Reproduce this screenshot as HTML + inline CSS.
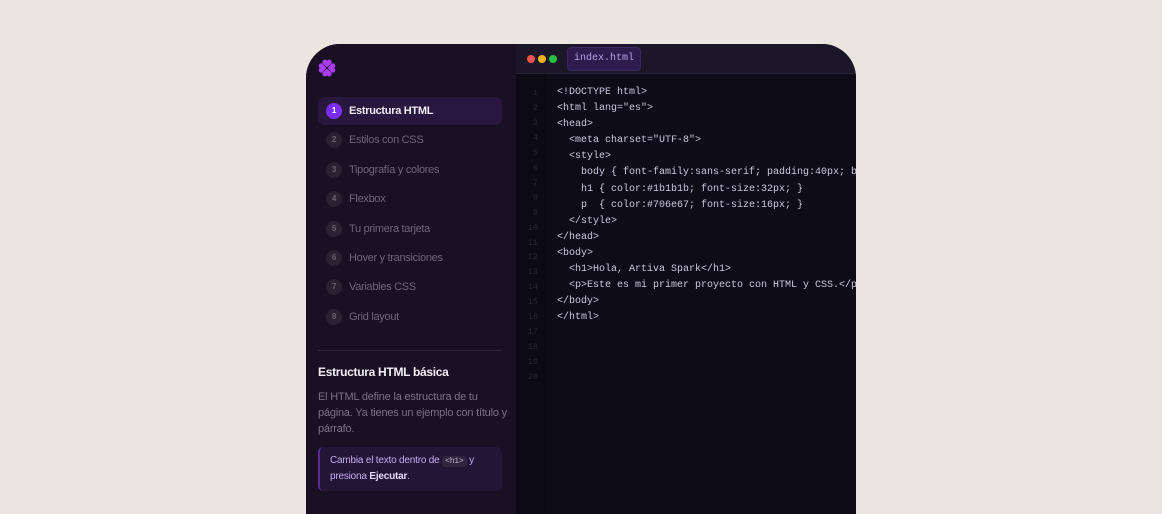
<!DOCTYPE html>
<html><head><style>
*{margin:0;padding:0;box-sizing:border-box}
body{width:1162px;height:501px;background:#ebe7e0;position:relative;overflow:hidden;font-family:"Liberation Sans",sans-serif}
.panel{position:absolute;left:306px;top:44px;width:550px;height:470px;border-radius:34px 34px 0 0;overflow:hidden;background:#1a1024}
.side{position:absolute;left:0;top:0;width:210px;height:100%;background:#1a1024}
.item{position:absolute;left:12px;width:184px;height:28px;border-radius:7px;font-size:11px;color:#6e6479;letter-spacing:-0.3px}
.item .n{position:absolute;left:8px;top:6px;width:16px;height:16px;border-radius:50%;background:#2a2133;color:#6a6074;font-size:8px;text-align:center;line-height:16px;font-weight:bold}
.item .t{position:absolute;left:31px;top:0;line-height:28px}
.item.a{background:#2a1740;color:#f1ecf6;font-weight:bold}
.item.a .n{background:#7c2ef0;color:#fff}
.ed{position:absolute;left:210px;top:0;right:0;height:100%;background:#0f0c1a}
.hdr{position:absolute;left:0;top:0;right:0;height:30px;background:#1b1628;border-bottom:1px solid #2a2436}
.dot{position:absolute;top:11px;width:8px;height:8px;border-radius:50%}
.tab{position:absolute;left:51px;top:3px;width:74px;height:24px;background:#2d1b4d;border:1px solid #3c2766;border-radius:4px;color:#b9a3e6;font:10px "Liberation Mono",monospace;text-align:center;line-height:22px}
.gut{position:absolute;left:0;top:30px;width:30px;bottom:0;background:#0c0a15;color:#2c2838;font:8.5px "Liberation Mono",monospace;text-align:right;padding-right:8px;padding-top:12px;line-height:14.95px}
pre{position:absolute;left:41px;top:41px;font:10px "Liberation Mono",monospace;color:#cbc8dc;line-height:16.1px;white-space:pre}
</style></head><body>
<div class="panel">
<div class="side">
<svg style="position:absolute;left:11px;top:14px" width="20" height="20" viewBox="0 0 18 18">
<g fill="#a93cf2">
<path id="h" d="M9 8.4 L5.2 5.1 A2.3 2.3 0 1 1 9 2.5 A2.3 2.3 0 1 1 12.8 5.1 Z"/>
<path d="M9 8.4 L5.2 5.1 A2.3 2.3 0 1 1 9 2.5 A2.3 2.3 0 1 1 12.8 5.1 Z" transform="rotate(90 9 9)"/>
<path d="M9 8.4 L5.2 5.1 A2.3 2.3 0 1 1 9 2.5 A2.3 2.3 0 1 1 12.8 5.1 Z" transform="rotate(180 9 9)"/>
<path d="M9 8.4 L5.2 5.1 A2.3 2.3 0 1 1 9 2.5 A2.3 2.3 0 1 1 12.8 5.1 Z" transform="rotate(270 9 9)"/>
</g></svg>
<div class="item a" style="top:53px"><span class="n">1</span><span class="t">Estructura HTML</span></div>
<div class="item" style="top:82px"><span class="n">2</span><span class="t">Estilos con CSS</span></div>
<div class="item" style="top:112px"><span class="n">3</span><span class="t">Tipografía y colores</span></div>
<div class="item" style="top:141px"><span class="n">4</span><span class="t">Flexbox</span></div>
<div class="item" style="top:171px"><span class="n">5</span><span class="t">Tu primera tarjeta</span></div>
<div class="item" style="top:200px"><span class="n">6</span><span class="t">Hover y transiciones</span></div>
<div class="item" style="top:229px"><span class="n">7</span><span class="t">Variables CSS</span></div>
<div class="item" style="top:259px"><span class="n">8</span><span class="t">Grid layout</span></div>
<div style="position:absolute;left:12px;top:306px;width:184px;height:1px;background:#2c2336"></div>
<div style="position:absolute;left:12px;top:321px;font-size:12px;font-weight:bold;color:#f3eef8;letter-spacing:-0.3px">Estructura HTML básica</div>
<div style="position:absolute;left:12px;top:345px;width:192px;font-size:11px;line-height:16px;color:#7a7085;letter-spacing:-0.2px">El HTML define la estructura de tu página. Ya tienes un ejemplo con título y párrafo.</div>
<div style="position:absolute;left:12px;top:403px;width:184px;height:44px;background:#221535;border-left:2px solid #5a2a9a;border-radius:5px;padding:6px 10px;font-size:10px;line-height:16px;color:#c7a9ef;letter-spacing:-0.2px">Cambia el texto dentro de <span style="font:8px 'Liberation Mono',monospace;background:#2f2540;color:#bdb5c8;padding:1px 3px;border-radius:3px">&lt;h1&gt;</span> y presiona <b style="color:#e6d9f8">Ejecutar</b>.</div>
</div>
<div class="ed">
<div class="hdr">
<div class="dot" style="left:11px;background:#f0524f"></div>
<div class="dot" style="left:22px;background:#f3b21c"></div>
<div class="dot" style="left:33px;background:#27c13f"></div>
<div class="tab">index.html</div>
</div>
<div class="gut">1<br>2<br>3<br>4<br>5<br>6<br>7<br>8<br>9<br>10<br>11<br>12<br>13<br>14<br>15<br>16<br>17<br>18<br>19<br>20</div>
<pre>&lt;!DOCTYPE html&gt;
&lt;html lang="es"&gt;
&lt;head&gt;
  &lt;meta charset="UTF-8"&gt;
  &lt;style&gt;
    body { font-family:sans-serif; padding:40px; background:#fff; }
    h1 { color:#1b1b1b; font-size:32px; }
    p  { color:#706e67; font-size:16px; }
  &lt;/style&gt;
&lt;/head&gt;
&lt;body&gt;
  &lt;h1&gt;Hola, Artiva Spark&lt;/h1&gt;
  &lt;p&gt;Este es mi primer proyecto con HTML y CSS.&lt;/p&gt;
&lt;/body&gt;
&lt;/html&gt;</pre>
</div>
</div>
</body></html>
